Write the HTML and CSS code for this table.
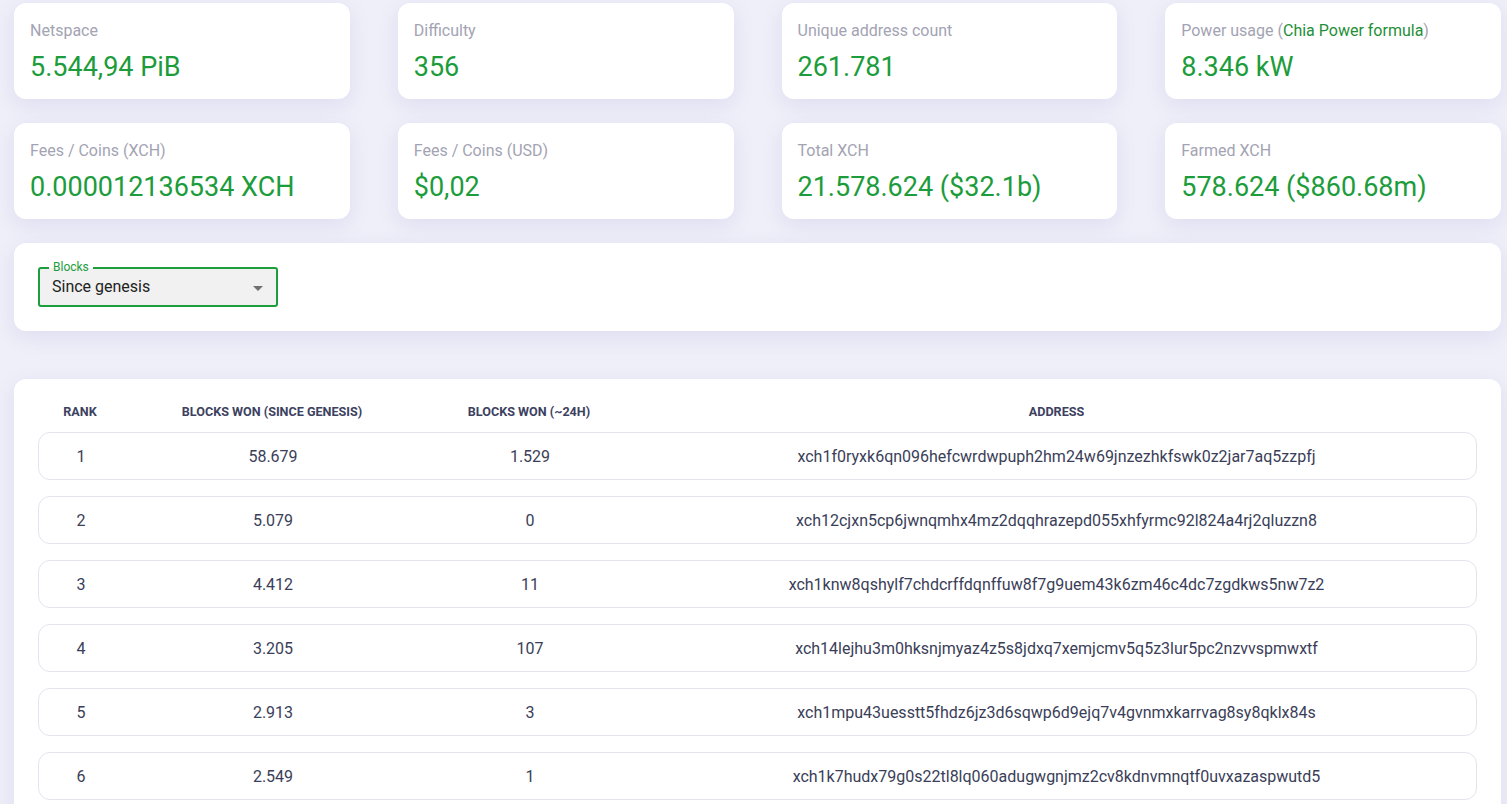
FILE: index.html
```html
<!DOCTYPE html>
<html>
<head>
<meta charset="utf-8">
<link rel="stylesheet" href="styles.css">
</head>
<body>
<div class="page">
  <div class="stats">
    <div class="card stat"><div class="label">Netspace</div><div class="value">5.544,94 PiB</div></div>
    <div class="card stat"><div class="label">Difficulty</div><div class="value">356</div></div>
    <div class="card stat"><div class="label">Unique address count</div><div class="value">261.781</div></div>
    <div class="card stat"><div class="label">Power usage (<a class="link">Chia Power formula</a>)</div><div class="value">8.346 kW</div></div>
    <div class="card stat"><div class="label">Fees / Coins (XCH)</div><div class="value">0.000012136534 XCH</div></div>
    <div class="card stat"><div class="label">Fees / Coins (USD)</div><div class="value">$0,02</div></div>
    <div class="card stat"><div class="label">Total XCH</div><div class="value">21.578.624 ($32.1b)</div></div>
    <div class="card stat"><div class="label">Farmed XCH</div><div class="value">578.624 ($860.68m)</div></div>
  </div>

  <div class="card filter">
    <div class="select">
      <span class="select-label">Blocks</span>
      <span class="select-value">Since genesis</span>
      <span class="caret"></span>
    </div>
  </div>

  <div class="card table">
    <div class="thead">
      <div>RANK</div>
      <div>BLOCKS WON (SINCE GENESIS)</div>
      <div>BLOCKS WON (~24H)</div>
      <div>ADDRESS</div>
    </div>
    <div class="row"><div>1</div><div>58.679</div><div>1.529</div><div>xch1f0ryxk6qn096hefcwrdwpuph2hm24w69jnzezhkfswk0z2jar7aq5zzpfj</div></div>
    <div class="row"><div>2</div><div>5.079</div><div>0</div><div>xch12cjxn5cp6jwnqmhx4mz2dqqhrazepd055xhfyrmc92l824a4rj2qluzzn8</div></div>
    <div class="row"><div>3</div><div>4.412</div><div>11</div><div>xch1knw8qshylf7chdcrffdqnffuw8f7g9uem43k6zm46c4dc7zgdkws5nw7z2</div></div>
    <div class="row"><div>4</div><div>3.205</div><div>107</div><div>xch14lejhu3m0hksnjmyaz4z5s8jdxq7xemjcmv5q5z3lur5pc2nzvvspmwxtf</div></div>
    <div class="row"><div>5</div><div>2.913</div><div>3</div><div>xch1mpu43uesstt5fhdz6jz3d6sqwp6d9ejq7v4gvnmxkarrvag8sy8qklx84s</div></div>
    <div class="row"><div>6</div><div>2.549</div><div>1</div><div>xch1k7hudx79g0s22tl8lq060adugwgnjmz2cv8kdnvmnqtf0uvxazaspwutd5</div></div>
  </div>
</div>
</body>
</html>
```

FILE: styles.css
```css
html, body {
  margin: 0;
  padding: 0;
}
body {
  background: #efeff9;
  font-family: Roboto, "Liberation Sans", sans-serif;
  overflow: hidden;
}
.page {
  padding: 3px 6px 0 14px;
}
.card {
  background: #fff;
  border-radius: 12px;
  box-shadow: 0 6px 20px rgba(110, 110, 190, 0.14);
}
.stats {
  display: grid;
  grid-template-columns: repeat(4, 1fr);
  column-gap: 48px;
  row-gap: 24px;
}
.stat {
  height: 96px;
  box-sizing: border-box;
  padding: 18px 16px 0 16px;
}
.label {
  font-size: 16px;
  color: #a3a3b3;
  line-height: 20px;
}
.link {
  color: #1f8f38;
}
.value {
  margin-top: 10px;
  font-size: 27px;
  color: #1c9c3b;
  line-height: 32px;
}
.filter {
  margin-top: 24px;
  height: 88px;
  box-sizing: border-box;
  padding: 24px 24px;
}
.select {
  position: relative;
  width: 240px;
  height: 40px;
  box-sizing: border-box;
  border: 2px solid #1d9e3c;
  border-radius: 3px;
  background: #f1f1f1;
  display: flex;
  align-items: center;
  padding: 0 12px;
}
.select-label {
  position: absolute;
  top: -8px;
  left: 9px;
  background: linear-gradient(#fff 55%, #f1f1f1 55%);
  padding: 0 4px;
  font-size: 12px;
  line-height: 13px;
  color: #1d9e3c;
}
.select-value {
  font-size: 16px;
  color: #222;
  margin-top: -1px;
}
.caret {
  position: absolute;
  right: 13px;
  top: 17px;
  width: 0;
  height: 0;
  border-left: 5px solid transparent;
  border-right: 5px solid transparent;
  border-top: 5px solid #707070;
}
.table {
  margin-top: 48px;
  padding: 12px 24px 40px 24px;
  border-radius: 12px 12px 0 0;
}
.thead, .row {
  display: grid;
  grid-template-columns: 84px 300px 214px 1fr;
  text-align: center;
}
.thead {
  height: 41px;
  align-items: center;
  font-size: 12.6px;
  font-weight: 700;
  color: #3c4160;
}
.row {
  height: 48px;
  box-sizing: border-box;
  border: 1px solid #e4e4ee;
  border-radius: 12px;
  align-items: center;
  font-size: 16px;
  color: #3a3e58;
  margin-bottom: 16px;
}
```
